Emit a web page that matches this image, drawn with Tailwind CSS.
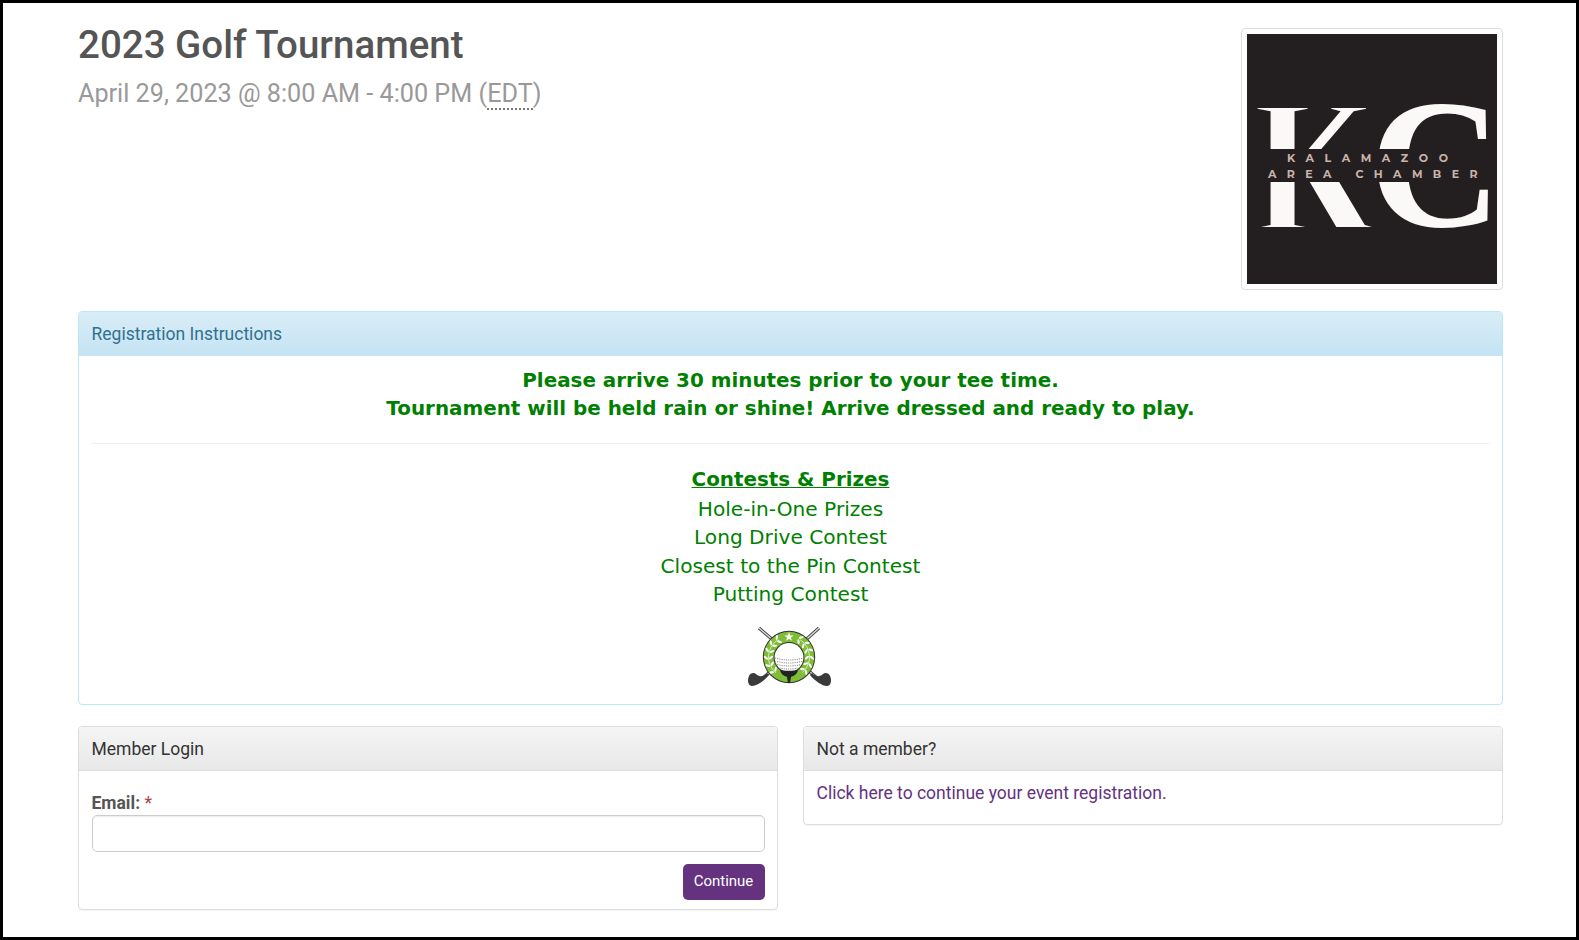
<!DOCTYPE html>
<html lang="en">
<head>
    <meta charset="UTF-8">
    <title>2023 Golf Tournament</title>
    <script src="https://cdn.jsdelivr.net/npm/@tailwindcss/browser@4"></script>
</head>
<body class="bg-white font-['Roboto',sans-serif] text-[17.5px] text-[#555]">
<div class="h-[940px] overflow-hidden border-[3px] border-black pt-[23px]">
    <div class="ml-[75px] w-[1425px]">

        <!-- Event title and logo -->
        <div class="flex items-start justify-between">
            <div class="-mt-[1px]">
                <h1 class="text-[38.5px] leading-[39.6px] font-medium text-[#555]">2023 Golf Tournament</h1>
                <p class="mt-[16px] text-[25.2px] leading-[26.4px] text-[#999]">April 29, 2023 @ 8:00 AM - 4:00 PM (<abbr class="border-b-2 border-dotted border-[#777] no-underline">EDT</abbr>)</p>
            </div>
            <div class="mt-[2px] rounded border border-[#ddd] p-[5px]">
                <svg class="block" width="250" height="250" viewBox="0 0 250 250">
                    <rect width="250" height="250" fill="#231f20"/>
                    <text transform="translate(8 200.5) scale(0.86 1.13)" font-family="Liberation Serif" font-weight="700" font-size="180" fill="#faf9f7">K</text>
                    <rect x="0" y="60" width="128" height="14" fill="#231f20"/>
                    <rect x="0" y="193" width="128" height="14" fill="#231f20"/>
                    <text x="122" y="192" font-family="Liberation Serif" font-weight="700" font-size="184" fill="#faf9f7">C</text>
                    <rect y="115" width="250" height="33" fill="#231f20"/>
                    <text x="40" y="128" font-family="Montserrat, Liberation Sans" font-size="11" font-weight="700" letter-spacing="10.6" fill="#c9b4ab">KALAMAZOO</text>
                    <text x="21" y="144" font-family="Montserrat, Liberation Sans" font-size="11" font-weight="700" letter-spacing="10.4" fill="#c9b4ab" xml:space="preserve">AREA CHAMBER</text>
                </svg>
            </div>
        </div>

        <!-- Registration instructions -->
        <div class="mt-[21px] overflow-hidden rounded border border-[#bce8f1]">
            <div class="h-[44px] bg-gradient-to-b from-[#d9edf7] to-[#c4e3f3] px-[12.5px] leading-[45px] text-[#31708f]">Registration Instructions</div>
            <div class="h-[348px] px-[12.5px] pt-[11px] text-center font-['DejaVu_Sans',sans-serif] text-[20.15px] leading-[28.57px] text-[#008000]">
                <p class="text-[19.9px] leading-[28px] font-bold">Please arrive 30 minutes prior to your tee time.<br>Tournament will be held rain or shine! Arrive dressed and ready to play.</p>
                <hr class="mt-[20px] mb-[22px] border-[#eee]">
                <p class="text-[19.9px] font-bold underline">Contests &amp; Prizes</p>
                <p>Hole-in-One Prizes</p>
                <p>Long Drive Contest</p>
                <p>Closest to the Pin Contest</p>
                <p>Putting Contest</p>
                <svg class="mx-auto mt-[16.5px] block -translate-x-[1px]" width="84" height="64" viewBox="0 0 84 64">
                    <defs>
                        <g id="leaf">
                            <ellipse cx="41" cy="9" rx="1.1" ry="2.5" fill="#fff" transform="rotate(40 41 9)"/>
                            <ellipse cx="41" cy="14" rx="1.1" ry="2.5" fill="#fff" transform="rotate(-40 41 14)"/>
                        </g>
                        <clipPath id="ballClip"><circle cx="41" cy="32.5" r="14"/></clipPath>
                    </defs>
                    <!-- clubs -->
                    <path d="M11 3 L69 53 M71 3 L15 53" stroke="#444" stroke-width="3.2"/>
                    <path d="M11 3 L69 53 M71 3 L15 53" stroke="#ddd" stroke-width="1.4"/>
                    <path d="M21 50 C16 56 9 61 4 61 C0 61 -1 55 1 51 C2 48 6 47 8 49 C11 52 15 52 19 48 Z" fill="#3a3a3a"/>
                    <path d="M62 50 C67 56 74 61 79 61 C83 61 84 55 82 51 C81 48 77 47 75 49 C72 52 68 52 64 48 Z" fill="#3a3a3a"/>
                    <!-- ring -->
                    <circle cx="41" cy="32" r="26.2" fill="#333"/>
                    <circle cx="41" cy="32" r="25.2" fill="#7fbd36"/>
                    <circle cx="41" cy="32.5" r="15.4" fill="#333"/>
                    <circle cx="41" cy="32.5" r="14.4" fill="#fff"/>
                    <!-- laurel -->
                    <path d="M51.9 14.6 A20.5 20.5 0 0 1 54.2 47.7 M30.1 14.6 A20.5 20.5 0 0 0 27.8 47.7" fill="none" stroke="#fff" stroke-width="0.7"/>
                    <use href="#leaf" transform="rotate(32 41 32)"/>
                    <use href="#leaf" transform="rotate(52 41 32)"/>
                    <use href="#leaf" transform="rotate(72 41 32)"/>
                    <use href="#leaf" transform="rotate(92 41 32)"/>
                    <use href="#leaf" transform="rotate(112 41 32)"/>
                    <use href="#leaf" transform="rotate(132 41 32)"/>
                    <use href="#leaf" transform="rotate(-32 41 32)"/>
                    <use href="#leaf" transform="rotate(-52 41 32)"/>
                    <use href="#leaf" transform="rotate(-72 41 32)"/>
                    <use href="#leaf" transform="rotate(-92 41 32)"/>
                    <use href="#leaf" transform="rotate(-112 41 32)"/>
                    <use href="#leaf" transform="rotate(-132 41 32)"/>
                    <polygon points="41,7 42.2,10.4 45.6,10.4 42.9,12.4 43.9,15.8 41,13.8 38.1,15.8 39.1,12.4 36.4,10.4 39.8,10.4" fill="#fff"/>
                    <!-- ball dimples -->
                    <g clip-path="url(#ballClip)" stroke="#888" stroke-width="1.1" stroke-dasharray="1.1 1.1" fill="none">
                        <path d="M27 33 Q41 37 55 33"/>
                        <path d="M27 36 Q41 40 55 36"/>
                        <path d="M27 39 Q41 43 55 39"/>
                        <path d="M27 42 Q41 46 55 42"/>
                    </g>
                    <!-- tee -->
                    <path d="M32 45 C36 46 46 46 50 45 C49 50 45 51 43 52 L42 58 L40 58 L39 52 C37 51 33 50 32 45 Z" fill="#222"/>
                </svg>
            </div>
        </div>

        <!-- Login / non-member panels -->
        <div class="mt-[21px] grid grid-cols-2 items-start gap-[25px]">
            <div class="overflow-hidden rounded border border-[#ddd] shadow-[0_1px_1px_rgba(0,0,0,0.05)]">
                <div class="h-[44px] border-b border-[#ddd] bg-gradient-to-b from-[#f5f5f5] to-[#e8e8e8] px-[12.5px] leading-[45px] text-[#333]">Member Login</div>
                <div class="h-[138px] px-[12.5px] pt-[20px]">
                    <label class="block leading-[24px] font-bold">Email: <span class="font-normal text-[#a94442]">*</span></label>
                    <input type="text" class="block h-[37px] w-full rounded-[5px] border border-[#ccc] bg-white shadow-[inset_0_1px_1px_rgba(0,0,0,0.075)]">
                    <div class="mt-[12px] flex justify-end">
                        <button class="h-[36px] w-[82px] rounded-[5px] bg-[#64327f] pb-[2px] text-[15px] text-white">Continue</button>
                    </div>
                </div>
            </div>
            <div class="overflow-hidden rounded border border-[#ddd] shadow-[0_1px_1px_rgba(0,0,0,0.05)]">
                <div class="h-[44px] border-b border-[#ddd] bg-gradient-to-b from-[#f5f5f5] to-[#e8e8e8] px-[12.5px] leading-[45px] text-[#333]">Not a member?</div>
                <div class="h-[53px] px-[12.5px] pt-[10px] leading-[25px]"><a href="#" class="text-[#64327f]">Click here to continue your event registration.</a></div>
            </div>
        </div>
    </div>
</div>
</body>
</html>
